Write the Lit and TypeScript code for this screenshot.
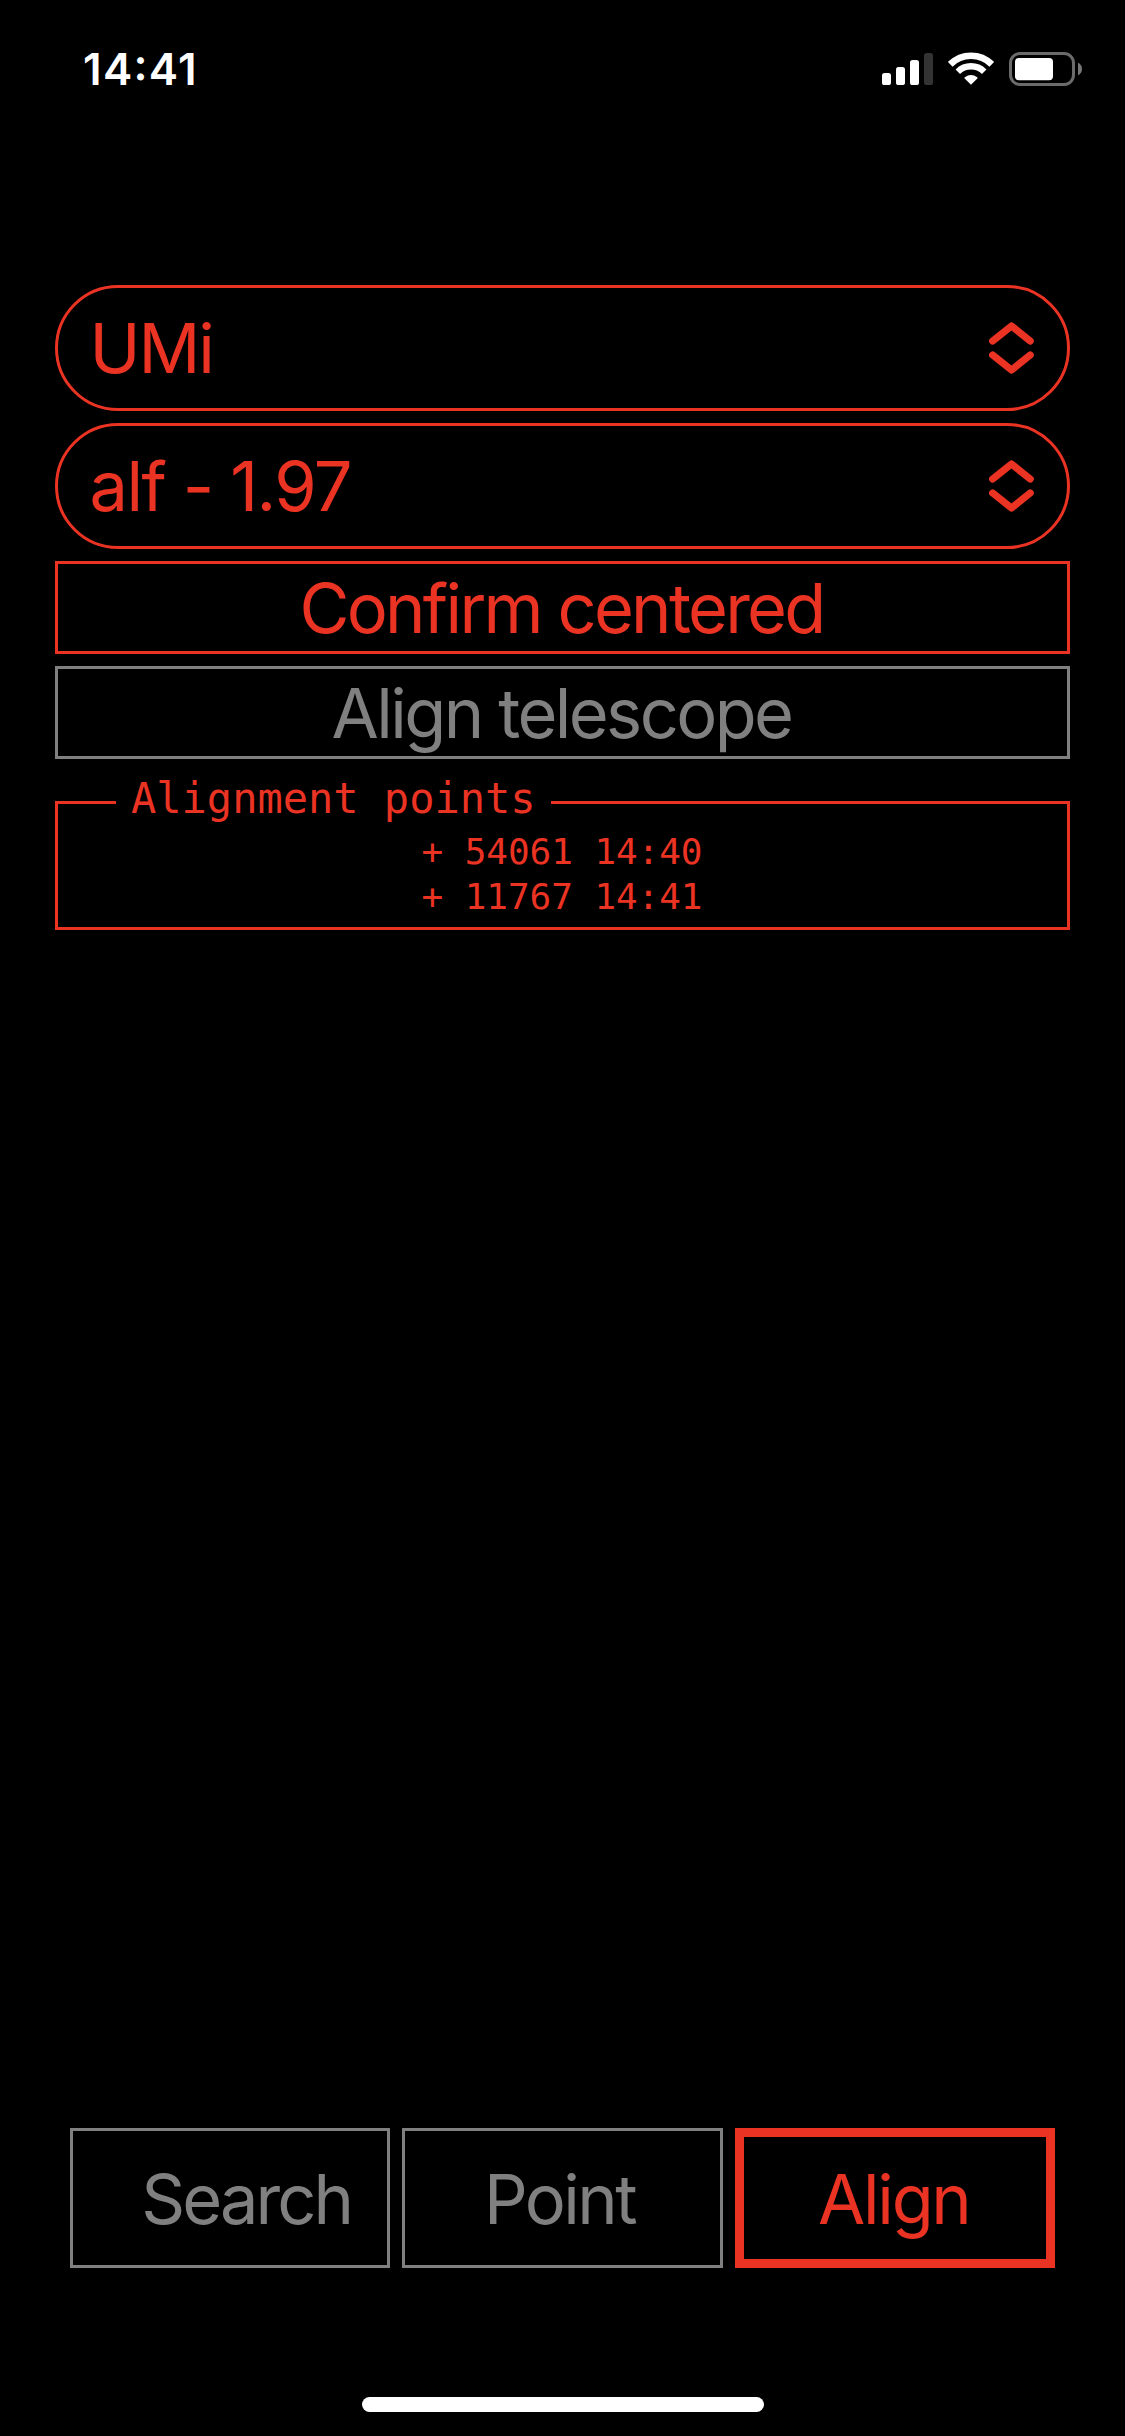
import { LitElement, html, css } from "lit";
import { customElement, property } from "lit/decorators.js";
import { classMap } from "lit/directives/class-map.js";

const signalIcon = html`
  <svg width="51" height="34" viewBox="0 0 51 34">
    <rect x="0" y="21" width="9" height="12" rx="2.6" fill="#fff" />
    <rect x="14" y="15" width="9" height="18" rx="2.6" fill="#fff" />
    <rect x="28" y="8" width="9" height="25" rx="2.6" fill="#fff" />
    <rect x="42" y="1" width="9" height="32" rx="2.6" fill="#333" />
  </svg>
`;

const wifiIcon = html`
  <svg width="46" height="34" viewBox="0 0 46 34">
    <g fill="none" stroke="#fff">
      <path d="M2.2 12.3A29.4 29.4 0 0 1 43.8 12.3" stroke-width="6.6" />
      <path d="M9.8 19.7A18.8 18.8 0 0 1 36.2 19.7" stroke-width="6.4" />
    </g>
    <path d="M23 32.8L16.4 26.2Q16.2 25.6 16.8 25.2Q23 20.6 29.2 25.2Q29.8 25.6 29.6 26.2Z" fill="#fff" />
  </svg>
`;

const batteryIcon = html`
  <svg width="73" height="34" viewBox="0 0 73 34">
    <rect x="1.5" y="1.5" width="63" height="31" rx="9.5" fill="none" stroke="#6b6b6b" stroke-width="3" />
    <rect x="6" y="6" width="38" height="22.3" rx="4" fill="#fff" />
    <path d="M69 10.7C71.6 11.8 73 14 73 17C73 20 71.6 22.2 69 23.3Z" fill="#777" />
  </svg>
`;

@customElement("status-bar")
class StatusBar extends LitElement {
  @property() time = "";

  static styles = css`
    :host {
      display: flex;
      justify-content: space-between;
      align-items: flex-start;
      box-sizing: border-box;
      height: 285px;
      padding: 42px 43px 0 83px;
    }
    .time {
      font: 600 44px/54px Inter, sans-serif;
      font-feature-settings: "calt" 1, "case" 1;
      letter-spacing: 1.3px;
      color: #fff;
    }
    .icons {
      display: flex;
      gap: 15px;
      padding-top: 10px;
    }
    svg {
      display: block;
    }
  `;

  render() {
    return html`
      <span class="time">${this.time}</span>
      <div class="icons">${signalIcon}${wifiIcon}${batteryIcon}</div>
    `;
  }
}

@customElement("picker-field")
class PickerField extends LitElement {
  @property() value = "";

  static styles = css`
    :host {
      display: flex;
      align-items: center;
      justify-content: space-between;
      box-sizing: border-box;
      height: 126px;
      padding: 0 33px 0 31px;
      border: 3px solid #eb3323;
      border-radius: 63px;
      color: #eb3323;
      font: 400 68.5px/84px Inter, sans-serif;
      letter-spacing: var(--tracking, -2.1px);
    }
    span {
      padding: 2px 0 0 0.6px;
    }
    svg {
      display: block;
    }
  `;

  render() {
    return html`
      <span>${this.value}</span>
      <svg width="45" height="52" viewBox="0 0 45 52">
        <g fill="none" stroke="#eb3323" stroke-width="7.2" stroke-linecap="round" stroke-linejoin="round">
          <path d="M3.7 19L22.5 4L41.2 19" />
          <path d="M3.7 33L22.5 48L41.2 33" />
        </g>
      </svg>
    `;
  }
}

@customElement("app-root")
class AppRoot extends LitElement {
  static styles = css`
    :host {
      display: flex;
      flex-direction: column;
      box-sizing: border-box;
      width: 1125px;
      height: 2436px;
      overflow: hidden;
      background: #000;
      color: #eb3323;
      font: 400 68.5px/84px Inter, sans-serif;
    }
    .controls {
      display: flex;
      flex-direction: column;
      gap: 12px;
      padding: 0 55px;
    }
    .star {
      --tracking: -1.63px;
    }
    button {
      box-sizing: border-box;
      margin: 0;
      border: 3px solid #eb3323;
      border-radius: 0;
      background: none;
      color: #eb3323;
      font: inherit;
      text-align: center;
      white-space: nowrap;
    }
    .action {
      height: 93px;
      padding: 3px 2px 0 0;
      letter-spacing: -2.7px;
    }
    .action.align {
      letter-spacing: -2.58px;
    }
    .muted {
      border-color: #808080;
      color: #808080;
    }
    .points {
      margin: 15px 55px 0;
      padding: 0 58px 8px;
      border: 3px solid #eb3323;
      font: 36px/45px "DejaVu Sans Mono", monospace;
    }
    .points legend {
      padding: 0 15px 8px;
      font-size: 42px;
      line-height: 49px;
    }
    .rows {
      margin: -2px 1px 0 0;
      letter-spacing: -0.07px;
      text-align: center;
    }
    .tabs {
      display: grid;
      grid-template-columns: repeat(3, 1fr);
      gap: 12px;
      height: 140px;
      margin: auto 70px 0;
    }
    .tab {
      padding: 4px 0 0;
    }
    .tab.search {
      padding-left: 32px;
      letter-spacing: -2.95px;
    }
    .tab.point {
      padding-right: 6px;
      letter-spacing: -2.6px;
    }
    .tab.align {
      padding-right: 2px;
      letter-spacing: -2.3px;
    }
    .tab.active {
      border-width: 9px;
    }
    .home {
      align-self: center;
      width: 402px;
      height: 15px;
      margin: 129px 0 24px 1px;
      border-radius: 8px;
      background: #fff;
    }
  `;

  private points = ["+ 54061 14:40", "+ 11767 14:41"];
  private tabs = ["Search", "Point", "Align"];
  private activeTab = "Align";

  render() {
    return html`
      <status-bar time="14:41"></status-bar>
      <div class="controls">
        <picker-field value="UMi"></picker-field>
        <picker-field class="star" value="alf - 1.97"></picker-field>
        <button class="action">Confirm centered</button>
        <button class="action align muted">Align telescope</button>
      </div>
      <fieldset class="points">
        <legend>Alignment points</legend>
        <div class="rows">${this.points.map((p) => html`<div>${p}</div>`)}</div>
      </fieldset>
      <div class="tabs">
        ${this.tabs.map((t) => {
          const active = t === this.activeTab;
          return html`<button
            class=${classMap({ tab: true, [t.toLowerCase()]: true, active, muted: !active })}
          >${t}</button>`;
        })}
      </div>
      <div class="home"></div>
    `;
  }
}
